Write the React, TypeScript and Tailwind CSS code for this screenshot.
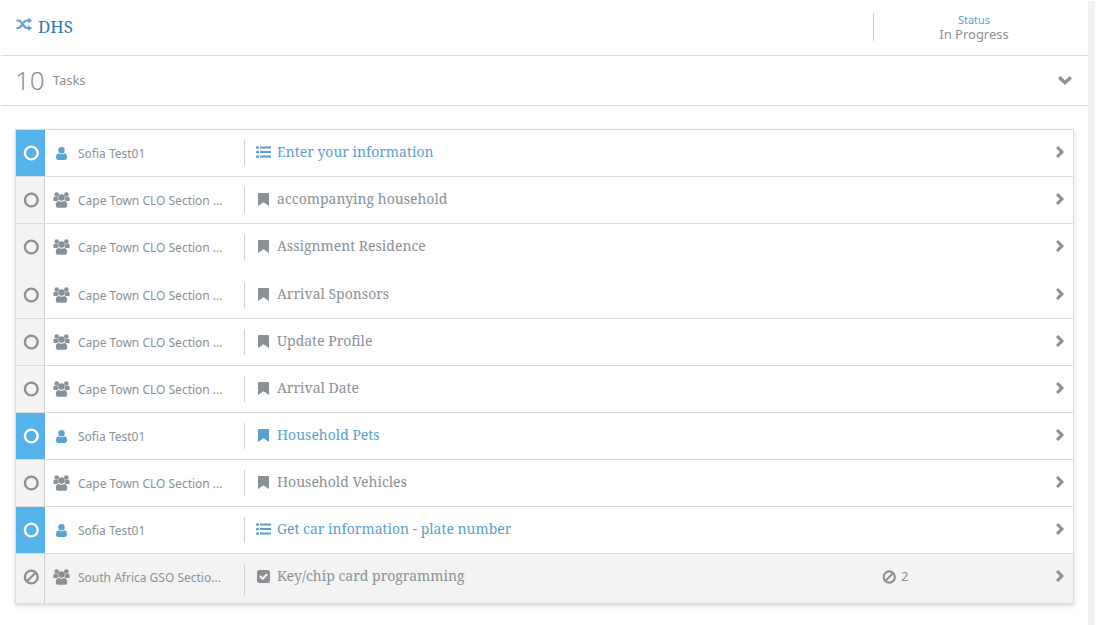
import type { ReactNode } from 'react';
import clsx from 'clsx';

type IconName = 'list' | 'bookmark' | 'check';

interface Task {
    title: string;
    assignee: string;
    icon: IconName;
    mine?: boolean;
    blocked?: number;
    joined?: boolean;
}

const CLO = 'Cape Town CLO Section ...';

const tasks: Task[] = [
    { title: 'Enter your information', assignee: 'Sofia Test01', icon: 'list', mine: true },
    { title: 'accompanying household', assignee: CLO, icon: 'bookmark' },
    { title: 'Assignment Residence', assignee: CLO, icon: 'bookmark', joined: true },
    { title: 'Arrival Sponsors', assignee: CLO, icon: 'bookmark' },
    { title: 'Update Profile', assignee: CLO, icon: 'bookmark' },
    { title: 'Arrival Date', assignee: CLO, icon: 'bookmark' },
    { title: 'Household Pets', assignee: 'Sofia Test01', icon: 'bookmark', mine: true },
    { title: 'Household Vehicles', assignee: CLO, icon: 'bookmark' },
    { title: 'Get car information - plate number', assignee: 'Sofia Test01', icon: 'list', mine: true },
    { title: 'Key/chip card programming', assignee: 'South Africa GSO Sectio...', icon: 'check', blocked: 2 },
];

function Svg({ box, className, children }: { box: string; className: string; children: ReactNode }) {
    return (
        <svg viewBox={box} className={clsx('shrink-0 fill-current', className)} aria-hidden="true">
            {children}
        </svg>
    );
}

function ShuffleIcon() {
    return (
        <Svg box="0 0 16 14" className="h-3.5 w-4">
            <g fill="none" stroke="currentColor" strokeWidth="2.200">
                <path d="M.5 3.500h1.700c4.600 0 4.400 7.500 9 7.500H13" />
                <path d="M.5 11h1.700c2.200 0 3.100-1.700 4-3.400M7.200 6.200C8.200 4.500 9.200 3.500 11.200 3.500H13" />
            </g>
            <path d="M12.300.5 16 3.500l-3.700 3zM12.300 8 16 11l-3.700 3z" />
        </Svg>
    );
}

function CircleIcon() {
    return (
        <Svg box="0 0 16 16" className="size-4">
            <circle cx="8.300" cy="8" r="6.400" fill="none" stroke="currentColor" strokeWidth="2.400" />
        </Svg>
    );
}

function BanIcon({ className }: { className: string }) {
    return (
        <Svg box="0 0 16 16" className={className}>
            <g fill="none" stroke="currentColor" strokeWidth="2.400">
                <circle cx="8.300" cy="8" r="6.400" />
                <path d="M3.800 12.500l9-9" />
            </g>
        </Svg>
    );
}

function UserIcon() {
    return (
        <Svg box="0 0 11 13" className="h-[13px] w-[11px]">
            <circle cx="5.500" cy="3.200" r="3.200" />
            <path d="M2.500 6.300C.7 6.500 0 8.200 0 10.600 0 12 .9 13 2.200 13h6.600c1.300 0 2.200-1 2.200-2.400 0-2.400-.7-4.100-2.500-4.300-.8.600-1.800 1-3 1s-2.200-.4-3-1z" />
        </Svg>
    );
}

function GroupIcon() {
    return (
        <Svg box="0 0 17 16" className="h-4 w-[17px]">
            <circle cx="3.700" cy="2.500" r="2.300" />
            <circle cx="13.300" cy="2.500" r="2.300" />
            <circle cx="8.500" cy="5.500" r="3.300" />
            <path d="M1.800 4.500C.8 4.700.3 5.800.3 7.500c0 .9.600 1.600 1.500 1.600h2.700l1-1.100a5 5 0 0 1-.8-3.300c-.8.500-2.100.500-2.900-.2zM15.200 4.500c1 .2 1.500 1.300 1.500 3 0 .9-.6 1.600-1.500 1.600h-2.700l-1-1.100a5 5 0 0 0 .8-3.300c.8.500 2.100.5 2.900-.2z" />
            <path d="M5.600 8.900C3.600 9 2.800 10.900 2.800 13.200c0 1.600.9 2.600 2.400 2.600h6.600c1.500 0 2.400-1 2.400-2.600 0-2.300-.8-4.200-2.800-4.300-.8.500-1.700.8-2.900.8s-2.100-.3-2.900-.8z" />
        </Svg>
    );
}

function ChevronIcon({ down }: { down?: boolean }) {
    return down ? (
        <Svg box="0 0 14 9" className="h-[9px] w-3.5">
            <path d="M2.400 0 7 4.400 11.600 0 14 2.400 7 9 0 2.400z" />
        </Svg>
    ) : (
        <Svg box="0 0 8 12" className="h-3 w-2">
            <path d="M2.200 0 8 6l-5.800 6L0 9.900 3.800 6 0 2.100z" />
        </Svg>
    );
}

function TaskIcon({ name }: { name: IconName }) {
    if (name === 'list') {
        return (
            <Svg box="0 0 15 12" className="h-3 w-[15px]">
                <circle cx="1.500" cy="1.500" r="1.500" />
                <circle cx="1.500" cy="6" r="1.500" />
                <circle cx="1.500" cy="10.500" r="1.500" />
                <path d="M4 .400h11v2.200H4zM4 4.900h11v2.200H4zM4 9.400h11v2.200H4z" />
            </Svg>
        );
    }
    if (name === 'bookmark') {
        return (
            <Svg box="0 0 11 13" className="h-[13px] w-[11px]">
                <path d="M.9 0h9.200c.5 0 .9.400.9.900V13L5.500 9.200 0 13V.9C0 .4.4 0 .9 0z" />
            </Svg>
        );
    }
    return (
        <Svg box="0 0 13 13" className="size-[13px]">
            <path
                fillRule="evenodd"
                d="M2.300 0h8.400C12 0 13 1 13 2.300v8.400c0 1.300-1 2.300-2.300 2.300H2.300C1 13 0 12 0 10.700V2.300C0 1 1 0 2.300 0zM5.700 10.200l5.200-5.200-1.500-1.500-3.700 3.700L3.700 5.200 2.200 6.700z"
            />
        </Svg>
    );
}

function TaskRow({ task }: { task: Task }) {
    const blocked = task.blocked !== undefined;

    return (
        <li
            className={clsx(
                'flex border-[#dcdcdc]',
                task.joined ? 'h-12' : 'not-last:border-b',
                blocked && 'bg-[#f3f3f3]',
            )}
        >
            <div
                className={clsx(
                    'flex w-[29px] shrink-0 justify-center border-r pt-[15px] pl-0.5',
                    task.mine ? 'border-[#55b3ec] bg-[#55b3ec] text-white' : 'border-[#cfcfcf] bg-[#f3f3f3]',
                )}
            >
                {blocked ? <BanIcon className="size-4" /> : <CircleIcon />}
            </div>
            <div className={clsx('mt-2.5 flex w-[200px] shrink-0 border-r border-[#cfcfcf]', blocked ? 'mb-2 h-[31px]' : 'mb-2.5 h-[26px]')}>
                <div className="flex h-[26px] min-w-0 items-center gap-2 pl-2">
                    <span className={clsx('flex w-[17px] shrink-0 justify-center', task.mine && 'text-[#5ba4d0]')}>
                        {task.mine ? <UserIcon /> : <GroupIcon />}
                    </span>
                    <span className="w-[150px] pt-0.5 text-xs whitespace-nowrap">{task.assignee}</span>
                </div>
            </div>
            <a
                href="#"
                className={clsx(
                    'flex h-11 min-w-0 flex-1 items-center gap-1.5 pl-[11px] font-["Noto_Serif",serif] text-sm',
                    task.mine && 'text-[#5b9fd0]',
                )}
            >
                <span className="flex w-[15px] shrink-0 justify-center">
                    <TaskIcon name={task.icon} />
                </span>
                <span className="truncate">{task.title}</span>
            </a>
            {blocked && (
                <span className="flex h-[46px] w-[165px] shrink-0 items-center gap-[5px] text-[13px]">
                    <BanIcon className="size-[14px]" />
                    {task.blocked}
                </span>
            )}
            <button type="button" aria-label={`Open ${task.title}`} className="flex h-11 w-[26px] shrink-0 items-center justify-center">
                <ChevronIcon />
            </button>
        </li>
    );
}

export default function App() {
    return (
        <div className='flex min-h-screen bg-white pt-px pr-px pl-px font-["Noto_Sans",sans-serif] text-[#8a9196]'>
            <main className="min-w-0 flex-1">
                <header className="flex h-[55px] items-center border-b border-[#dcdcdc] pb-0.5 pl-[15px]">
                    <h1 className='flex flex-1 items-start gap-1.5 font-["Noto_Serif",serif] text-[17px] leading-5 text-[#2f7cab]'>
                        <span className="text-[#5ba4d0]">
                            <ShuffleIcon />
                        </span>
                        DHS
                    </h1>
                    <dl className="flex h-7 w-[215px] flex-col items-center justify-center border-l border-[#cfcfcf] pr-3.5">
                        <dt className="text-[11px] leading-[15px] text-[#5b9fd0]">Status</dt>
                        <dd className="text-[13px] leading-[15px]">In Progress</dd>
                    </dl>
                </header>

                <section className="flex h-[50px] items-center gap-2 border-b border-[#dcdcdc] pr-4 pl-3.5">
                    <span className="text-[26px] font-light">10</span>
                    <h2 className="flex-1 text-[13px]">Tasks</h2>
                    <button type="button" aria-label="Toggle tasks">
                        <ChevronIcon down />
                    </button>
                </section>

                <ul className="mx-3.5 mt-[23px] border border-[#dcdcdc] shadow-[0_2px_4px_rgba(0,0,0,0.15)]">
                    {tasks.map((task) => (
                        <TaskRow key={task.title} task={task} />
                    ))}
                </ul>
            </main>
            <div className="w-[7px] shrink-0 bg-[#f2f2f2]" />
        </div>
    );
}
